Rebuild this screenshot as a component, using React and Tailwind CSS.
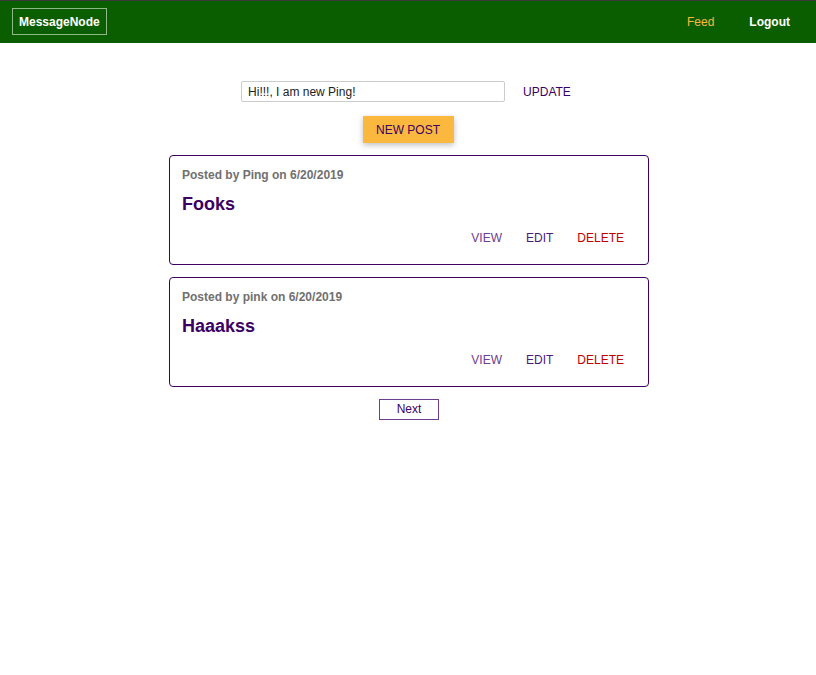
export default function App() {
  const posts = [
    { author: "Ping", date: "6/20/2019", title: "Fooks" },
    { author: "pink", date: "6/20/2019", title: "Haaakss" },
  ];
  return (
    <div className="min-h-[675px] bg-white font-['Liberation_Sans',Arial,sans-serif]">
      <header className="h-[43px] bg-[#0b5e00] border-t border-[#3a3a3a] flex items-center justify-between pl-[12px] pr-[26px]">
        <div className="border border-[#8fb88a] h-[27px] w-[95px] px-[6px] flex items-center text-white font-bold text-[12px] mt-[-1px]">
          MessageNode
        </div>
        <nav className="flex items-center gap-[35px] text-[12px] mt-[-1px]">
          <span className="text-[#fab83f]">Feed</span>
          <span className="text-white font-bold">Logout</span>
        </nav>
      </header>
      <main className="flex flex-col items-center pt-[38px]">
        <div className="flex items-center mr-[4px]">
          <div className="w-[264px] h-[21px] border border-[#ccc] rounded-[2px] flex items-center px-[6px] text-[12px] text-[#222]">
            Hi!!!, I am new Ping!
          </div>
          <span className="ml-[18px] text-[12px] text-[#3b0062]">UPDATE</span>
        </div>
        <div className="mt-[14px] w-[91px] h-[27px] bg-[#fab83f] shadow-[0_2px_6px_rgba(0,0,0,0.26)] flex items-center justify-center text-[12px] text-[#3b0062]">
          NEW POST
        </div>
        <div className="mt-[12px] ml-[2px] flex flex-col gap-[12px]">
          {posts.map((p, i) => (
            <div key={i} className="w-[480px] h-[110px] border border-[#3b0062] rounded-[4px] px-[12px] pt-[12px]">
              <div className="text-[12px] font-bold text-[#707070] leading-[14px]">
                Posted by {p.author} on {p.date}
              </div>
              <div className="mt-[12px] text-[18px] font-bold text-[#3b0062] leading-[21px]">
                {p.title}
              </div>
              <div className="mt-[16px] flex justify-end gap-[24px] pr-[12px] text-[12px] leading-[14px]">
                <span className="text-[#6d3d8f]">VIEW</span>
                <span className="text-[#4a1a78]">EDIT</span>
                <span className="text-[#c00000]">DELETE</span>
              </div>
            </div>
          ))}
        </div>
        <div className="mt-[12px] ml-[2px] w-[60px] h-[21px] border border-[#6d3d8f] flex items-center justify-center text-[12px] text-[#3b0062] leading-[14px] pb-[1px]">
          Next
        </div>
      </main>
    </div>
  );
}
